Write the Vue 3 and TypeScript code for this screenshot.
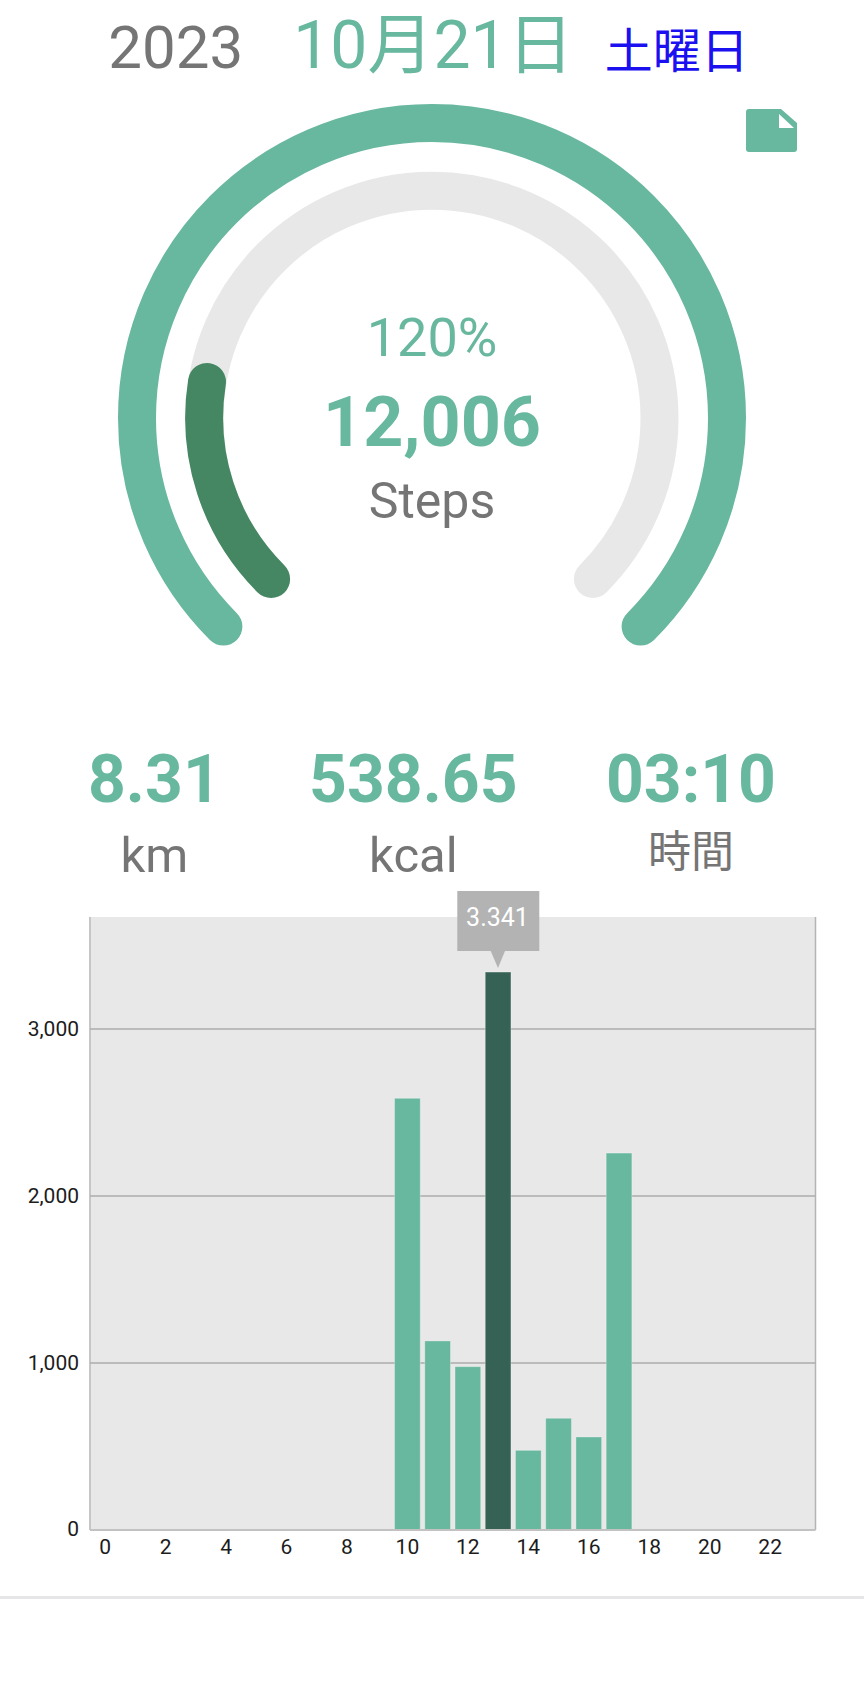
<script setup lang="ts">
type Stat = { value: string; unit: string; cjk?: boolean }

const stats: Stat[] = [
  { value: '8.31', unit: 'km' },
  { value: '538.65', unit: 'kcal' },
  { value: '03:10', unit: '時間', cjk: true }
]

const plot = { left: 90, width: 725.5, height: 613 }
const step = plot.width / 24
const perUnit = 167 / 1000

const hourly: Record<number, number> = {
  10: 2585,
  11: 1132,
  12: 978,
  13: 3341,
  14: 477,
  15: 669,
  16: 557,
  17: 2257
}

const bars = Object.entries(hourly).map(([h, v]) => {
  const hour = Number(h)
  const height = v * perUnit
  return {
    hour,
    x: (hour + 0.075) * step,
    y: plot.height - height,
    height,
    active: hour === 13
  }
})

const xLabels = Array.from({ length: 12 }, (_, i) => i * 2)
const yLabels = [
  { text: '3,000', value: 3000 },
  { text: '2,000', value: 2000 },
  { text: '1,000', value: 1000 }
]
</script>

<template>
  <div class="page">
    <header class="date">
      <span class="year">2023</span>
      <span class="day">10月21日</span>
      <span class="weekday">土曜日</span>
    </header>

    <section class="gauge">
      <svg class="rings" width="864" height="560" viewBox="0 96 864 560">
        <path class="outer" d="M223.4 626.6 A295 295 0 1 1 640.6 626.6" />
        <path class="track" d="M271.1 579 A227.5 227.5 0 1 1 592.9 579" />
        <path class="progress" d="M271.1 579 A227.5 227.5 0 0 1 207 382" />
      </svg>
      <svg class="note" width="51" height="43" viewBox="0 0 51 43">
        <path d="M3 0H35L51 14V40a3 3 0 0 1-3 3H3a3 3 0 0 1-3-3V3a3 3 0 0 1 3-3Z" fill="#68b79f" />
        <path d="M33 5L48 19H33Z" fill="#fff" />
      </svg>
      <div class="readout">
        <div class="percent">120%</div>
        <div class="steps">12,006</div>
        <div class="label">Steps</div>
      </div>
    </section>

    <section class="stats">
      <div v-for="s in stats" :key="s.unit" class="stat">
        <div class="value">{{ s.value }}</div>
        <div class="unit" :class="{ cjk: s.cjk }">{{ s.unit }}</div>
      </div>
    </section>

    <section class="chart">
      <svg width="864" height="705" viewBox="0 -26 864 705">
        <g :transform="`translate(${plot.left} 0)`">
          <rect :width="plot.width" :height="plot.height" fill="#e8e8e8" />
          <line x1="0" y1="0" x2="0" :y2="plot.height" class="frame" />
          <line :x1="plot.width" y1="0" :x2="plot.width" :y2="plot.height" class="frame thin" />
          <line
            v-for="y in yLabels"
            :key="y.value"
            x1="0"
            :x2="plot.width"
            :y1="plot.height - y.value * perUnit"
            :y2="plot.height - y.value * perUnit"
            class="grid"
          />
          <rect
            v-for="b in bars"
            :key="b.hour"
            class="bar"
            :x="b.x"
            :y="b.y"
            :width="step * 0.85"
            :height="b.height"
            :fill="b.active ? '#366155' : '#68b79f'"
          />
          <line x1="0" :y1="plot.height" :x2="plot.width" :y2="plot.height" class="base" />
          <text
            v-for="h in xLabels"
            :key="h"
            :x="(h + 0.5) * step"
            :y="plot.height + 24"
            class="tick"
            text-anchor="middle"
          >{{ h }}</text>
          <text
            v-for="y in yLabels"
            :key="y.value"
            x="-11"
            :y="plot.height - y.value * perUnit + 7"
            class="tick"
            text-anchor="end"
          >{{ y.text }}</text>
          <text x="-11" :y="plot.height + 6" class="tick" text-anchor="end">0</text>
          <rect x="367.3" y="-26" width="82" height="60" fill="#b3b3b3" />
          <path d="M400.7 34H415L408 51Z" fill="#b3b3b3" />
          <text x="407.5" y="9" class="tip" text-anchor="middle">3.341</text>
        </g>
      </svg>
    </section>

    <div class="rule"></div>
  </div>
</template>

<style>
body {
  background: #fff;
}
</style>

<style scoped>
.page {
  width: 864px;
  height: 1695px;
  font-family: Roboto, "Noto Sans CJK JP", sans-serif;
  overflow: hidden;
}
.date {
  height: 96px;
  box-sizing: border-box;
  display: flex;
  align-items: baseline;
  justify-content: center;
  padding: 8px 7px 0 0;
  line-height: 76px;
}
.year {
  font-size: 60px;
  color: #757575;
  margin-right: 50px;
}
.day {
  font-size: 66px;
  color: #68b79f;
  margin-right: 31px;
}
.weekday {
  font-size: 48px;
  color: #1a10f0;
}
.gauge {
  position: relative;
  height: 560px;
}
.rings {
  display: block;
}
.rings path {
  fill: none;
  stroke-linecap: round;
  stroke-width: 38px;
}
.outer {
  stroke: #68b79f;
}
.track {
  stroke: #e8e8e8;
}
.progress {
  stroke: #458763;
}
.note {
  position: absolute;
  top: 13px;
  left: 746px;
}
.readout {
  position: absolute;
  top: 210px;
  left: 0;
  right: 0;
  text-align: center;
}
.percent {
  font-size: 54px;
  line-height: 64px;
  color: #68b79f;
}
.steps {
  font-size: 70px;
  font-weight: 700;
  line-height: 84px;
  margin-top: 10px;
  color: #68b79f;
}
.label {
  font-size: 50px;
  line-height: 56px;
  margin-top: 9px;
  color: #757575;
}
.stats {
  display: flex;
  justify-content: space-between;
  padding: 0 88px;
  margin-top: 86px;
}
.stat {
  text-align: center;
}
.value {
  font-size: 66px;
  font-weight: 700;
  line-height: 76px;
  color: #68b79f;
}
.unit {
  font-size: 49px;
  line-height: 70px;
  margin-top: 3px;
  color: #757575;
}
.unit.cjk {
  font-size: 43px;
  margin-top: -1px;
}
.chart svg {
  display: block;
}
.frame {
  stroke: #c6c6c6;
  stroke-width: 2;
}
.frame.thin {
  stroke: #b4b4b4;
  stroke-width: 1.5;
}
.grid {
  stroke: #adadad;
  stroke-width: 1.5;
}
.base {
  stroke: #c2c2c2;
  stroke-width: 2;
}
.bar {
  stroke: rgba(255, 255, 255, 0.3);
  stroke-width: 1;
}
.tick {
  font-size: 21px;
  fill: #1c1c1c;
}
.tip {
  font-size: 25px;
  fill: #fff;
}
.rule {
  height: 3px;
  background: #e6e6e8;
}
</style>
